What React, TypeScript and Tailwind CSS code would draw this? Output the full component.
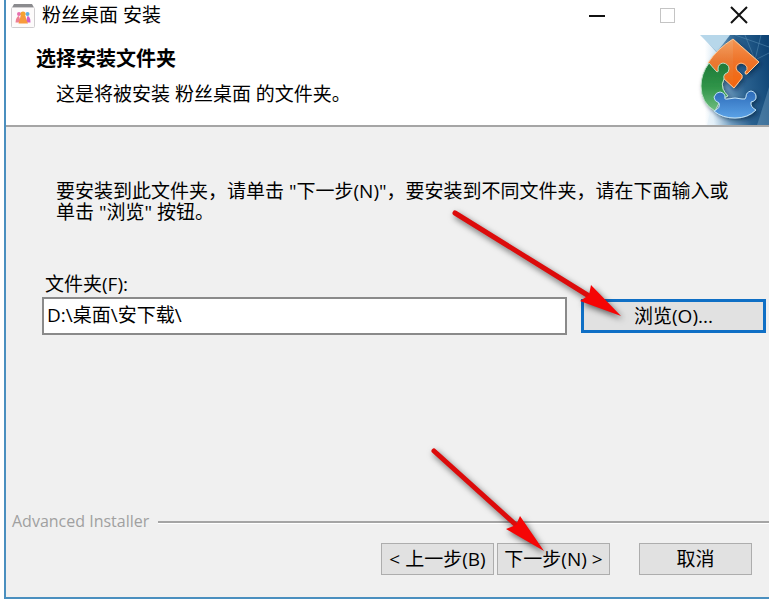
import React from 'react';

const fontStack = "font-['Open_Sans','Noto_Sans_CJK_SC',sans-serif]";

function AppIcon() {
  return (
    <svg width="26" height="26" viewBox="0 0 26 26" aria-hidden="true">
      <path d="M4 2 H22 L24 5.5 H2 Z" fill="#8b8b8e" />
      <rect x="1.5" y="5.5" width="23" height="20" rx="1" fill="#fdfbfb" stroke="#cfcdcf" />
      <circle cx="9" cy="12" r="2" fill="#e86fae" />
      <path d="M5.5 20.5 Q6 14.5 9 14 L11 20.5 Z" fill="#ee7f92" />
      <circle cx="17.5" cy="12" r="2" fill="#62aee0" />
      <path d="M20.5 20.5 Q20.5 14.5 17.5 14 L15.5 20.5 Z" fill="#d25fc4" />
      <circle cx="13" cy="12" r="2.6" fill="#f5a32e" />
      <path d="M8.5 21.5 Q10 18 10.5 14 H15.5 Q16 18 18 21.5 Z" fill="#f79a3c" />
    </svg>
  );
}

function PuzzleBanner() {
  return (
    <svg width="84" height="90" viewBox="0 0 84 90" className="shrink-0" aria-hidden="true">
      <defs>
        <linearGradient id="sky" x1="0" y1="0.4" x2="1" y2="0.2">
          <stop offset="0" stopColor="#ffffff" />
          <stop offset="0.22" stopColor="#e2eff8" />
          <stop offset="0.42" stopColor="#6f9dc0" />
          <stop offset="0.65" stopColor="#2b6290" />
          <stop offset="1" stopColor="#0d4374" />
        </linearGradient>
        <linearGradient id="fade" x1="0" y1="0" x2="1" y2="0">
          <stop offset="0" stopColor="#ffffff" />
          <stop offset="0.6" stopColor="#ffffff" />
          <stop offset="1" stopColor="#cfe4f2" />
        </linearGradient>
        <linearGradient id="orange" x1="0" y1="0" x2="0" y2="1">
          <stop offset="0" stopColor="#f3a266" />
          <stop offset="0.45" stopColor="#ea7a34" />
          <stop offset="1" stopColor="#f2680e" />
        </linearGradient>
        <linearGradient id="green" x1="0" y1="0" x2="0" y2="1">
          <stop offset="0" stopColor="#1f7a38" />
          <stop offset="0.5" stopColor="#2f9448" />
          <stop offset="1" stopColor="#6fbd80" />
        </linearGradient>
        <linearGradient id="blue" x1="0" y1="0" x2="0" y2="1">
          <stop offset="0" stopColor="#2c6ab8" />
          <stop offset="1" stopColor="#5ba2e6" />
        </linearGradient>
        <filter id="pieceShadow" x="-20%" y="-20%" width="150%" height="150%">
          <feDropShadow dx="2" dy="2" stdDeviation="2" floodColor="#001c3c" floodOpacity="0.6" />
        </filter>
      </defs>
      <rect width="84" height="90" fill="url(#sky)" />
      <path d="M0 0 H16 L33 19 Q18 32 17 52 Q18 66 26 73 L22 90 H0 Z" fill="url(#fade)" />
      <path d="M15 0 H45 L32 17 Z" fill="#b7d7ea" />
      <path d="M50 0 L84 12 M60 0 L70 25 L84 18 M70 25 L76 0" stroke="#5e93b9" fill="none" opacity="0.5" />
      <path d="M74 84 L84 52 V90 H72 Z" fill="#89b4d0" opacity="0.35" />
      <g filter="url(#pieceShadow)">
        {/* orange piece */}
        <path
          d="M48 4 L74 27 L62 39 Q60 40 60 37 Q63 35 62 32 Q60 28 56 28 Q51 29 51 33 Q51 36 55 38 Q58 40 57 43 L49 53 L36 41 L23 28 Q32 14 48 4 Z"
          fill="url(#orange)"
          stroke="#ffc894"
        />
        {/* green piece */}
        <path
          d="M24 28 Q30 35 32 37 Q34 37 33 34 Q33 29 38 28 Q44 29 44 34 Q44 38 40 39 Q38 41 39 44 Q36 49 38 54 Q40 58 43 61 L36 64 L30 76 Q16 68 16 51 Q16 39 24 28 Z"
          fill="url(#green)"
          stroke="#b9dfc4"
        />
        {/* blue piece */}
        <path
          d="M29 76 Q36 73 34 68 Q29 66 29 62 Q31 57 35 57 Q40 58 40 62 Q39 65 43 64 Q50 62 57 64 Q61 65 61 62 Q61 57 66 56 Q71 57 71 62 Q71 66 66 67 Q65 72 71 75 Q63 83 50 83 Q37 83 29 76 Z"
          fill="url(#blue)"
          stroke="#c1e3f8"
        />
      </g>
      <path d="M48 5 V51 L51 50 L57 42 L55 38 L51 34 L56 28 L62 32 L61 38 L72 27 Z" fill="#ff5a00" opacity="0.2" />
    </svg>
  );
}

/* Red pointer drawn over the form, placed against the button it points to */
function BrowseArrow() {
  return (
    <svg
      width="180"
      height="120"
      viewBox="0 0 180 120"
      className="pointer-events-none absolute -left-[131px] -top-[91px] drop-shadow-[2px_3px_3px_rgba(0,0,0,0.6)]"
      aria-hidden="true"
    >
      <path d="M5 5 L139 88" stroke="#dc0b0b" strokeWidth="5" strokeLinecap="round" />
      <path d="M141 77 L139 87 L130 93 L171 108 Z" fill="#f50505" />
    </svg>
  );
}

function NextArrow() {
  return (
    <svg
      width="130"
      height="120"
      viewBox="0 0 130 120"
      className="pointer-events-none absolute -left-[68px] -top-[97px] drop-shadow-[2px_3px_3px_rgba(0,0,0,0.6)]"
      aria-hidden="true"
    >
      <path d="M5 5 L87 79" stroke="#dc0b0b" strokeWidth="5" strokeLinecap="round" />
      <path d="M91 70 L87 79 L77 83 L115 105 Z" fill="#f50505" />
    </svg>
  );
}

const footerButton =
  'h-8 w-[113px] whitespace-nowrap border border-[#adadad] bg-[#e1e1e1] text-[19px] leading-7';

export default function App() {
  return (
    <div className={`flex min-h-screen flex-col bg-white pb-[2px] pl-1 pr-[2px] text-[19px] text-black ${fontStack}`}>
      <div className="flex flex-1 flex-col border-b-2 border-l-2 border-[#4a8fbf] bg-[#f0f0f0]">
        {/* Title bar */}
        <div className="flex h-[35px] items-center bg-white pb-[6px] pl-1">
          <AppIcon />
          <h1 className="ml-[6px] flex-1 leading-7">粉丝桌面 安装</h1>
          <div className="flex items-center gap-[47px] pr-[18px]">
            <button type="button" aria-label="最小化" className="flex h-6 w-6 items-center justify-center">
              <svg width="24" height="24" aria-hidden="true">
                <path d="M4 13 H20" stroke="#111" strokeWidth="2" />
              </svg>
            </button>
            <button type="button" aria-label="最大化" disabled className="flex h-6 w-6 items-center justify-center">
              <svg width="24" height="24" fill="none" aria-hidden="true">
                <rect x="4.5" y="5.5" width="14" height="14" stroke="#c4c4c4" />
              </svg>
            </button>
            <button type="button" aria-label="关闭" className="flex h-6 w-6 items-center justify-center">
              <svg width="24" height="24" aria-hidden="true">
                <path d="M4 4 L20 20 M20 4 L4 20" stroke="#111" strokeWidth="2" />
              </svg>
            </button>
          </div>
        </div>

        {/* Header */}
        <div className="flex justify-between border-b-2 border-[#a5a5a5] bg-white">
          <div className="pl-[30px] pt-[10px]">
            <h2 className="text-[20px] font-bold leading-7">选择安装文件夹</h2>
            <p className="mt-[7px] pl-5 leading-7">这是将被安装 粉丝桌面 的文件夹。</p>
          </div>
          <PuzzleBanner />
        </div>

        {/* Folder form */}
        <div className="flex-1 pt-[54px]">
          <p className="pl-[50px] pr-6 leading-[21px]">
            要安装到此文件夹，请单击 "下一步(N)"，要安装到不同文件夹，请在下面输入或单击 "浏览" 按钮。
          </p>
          <div className="mt-[49px] pl-9 pr-[3px]">
            <label htmlFor="folder" className="block pl-[3px] leading-6">
              文件夹(F):
            </label>
            <div className="mt-px flex items-center gap-[14px]">
              <input
                id="folder"
                type="text"
                defaultValue="D:\桌面\安下载\"
                className="h-[38px] min-w-0 flex-1 border-2 border-[#8a8a8a] bg-white pb-1 pl-[3px] outline-none"
              />
              <div className="relative">
                <button
                  type="button"
                  className="h-[34px] w-[185px] border-[3px] border-[#0f6fc5] bg-[#e1e1e1] leading-7"
                >
                  浏览(O)...
                </button>
                <BrowseArrow />
              </div>
            </div>
          </div>
        </div>

        {/* Footer */}
        <div className="flex items-center gap-[9px] pl-[6px]">
          <span className="text-[16px] leading-6 text-[#a0a0a0]">Advanced Installer</span>
          <div className="mt-[2px] h-[3px] flex-1 border-t-2 border-[#a5a5a5] bg-white" />
        </div>
        <div className="flex justify-end pb-[22px] pr-[17px] pt-[10px]">
          <button type="button" className={footerButton}>
            &lt; 上一步(B)
          </button>
          <div className="relative ml-[3px]">
            <button type="button" className={footerButton}>
              下一步(N) &gt;
            </button>
            <NextArrow />
          </div>
          <button type="button" className={`ml-[29px] ${footerButton}`}>
            取消
          </button>
        </div>
      </div>
    </div>
  );
}
